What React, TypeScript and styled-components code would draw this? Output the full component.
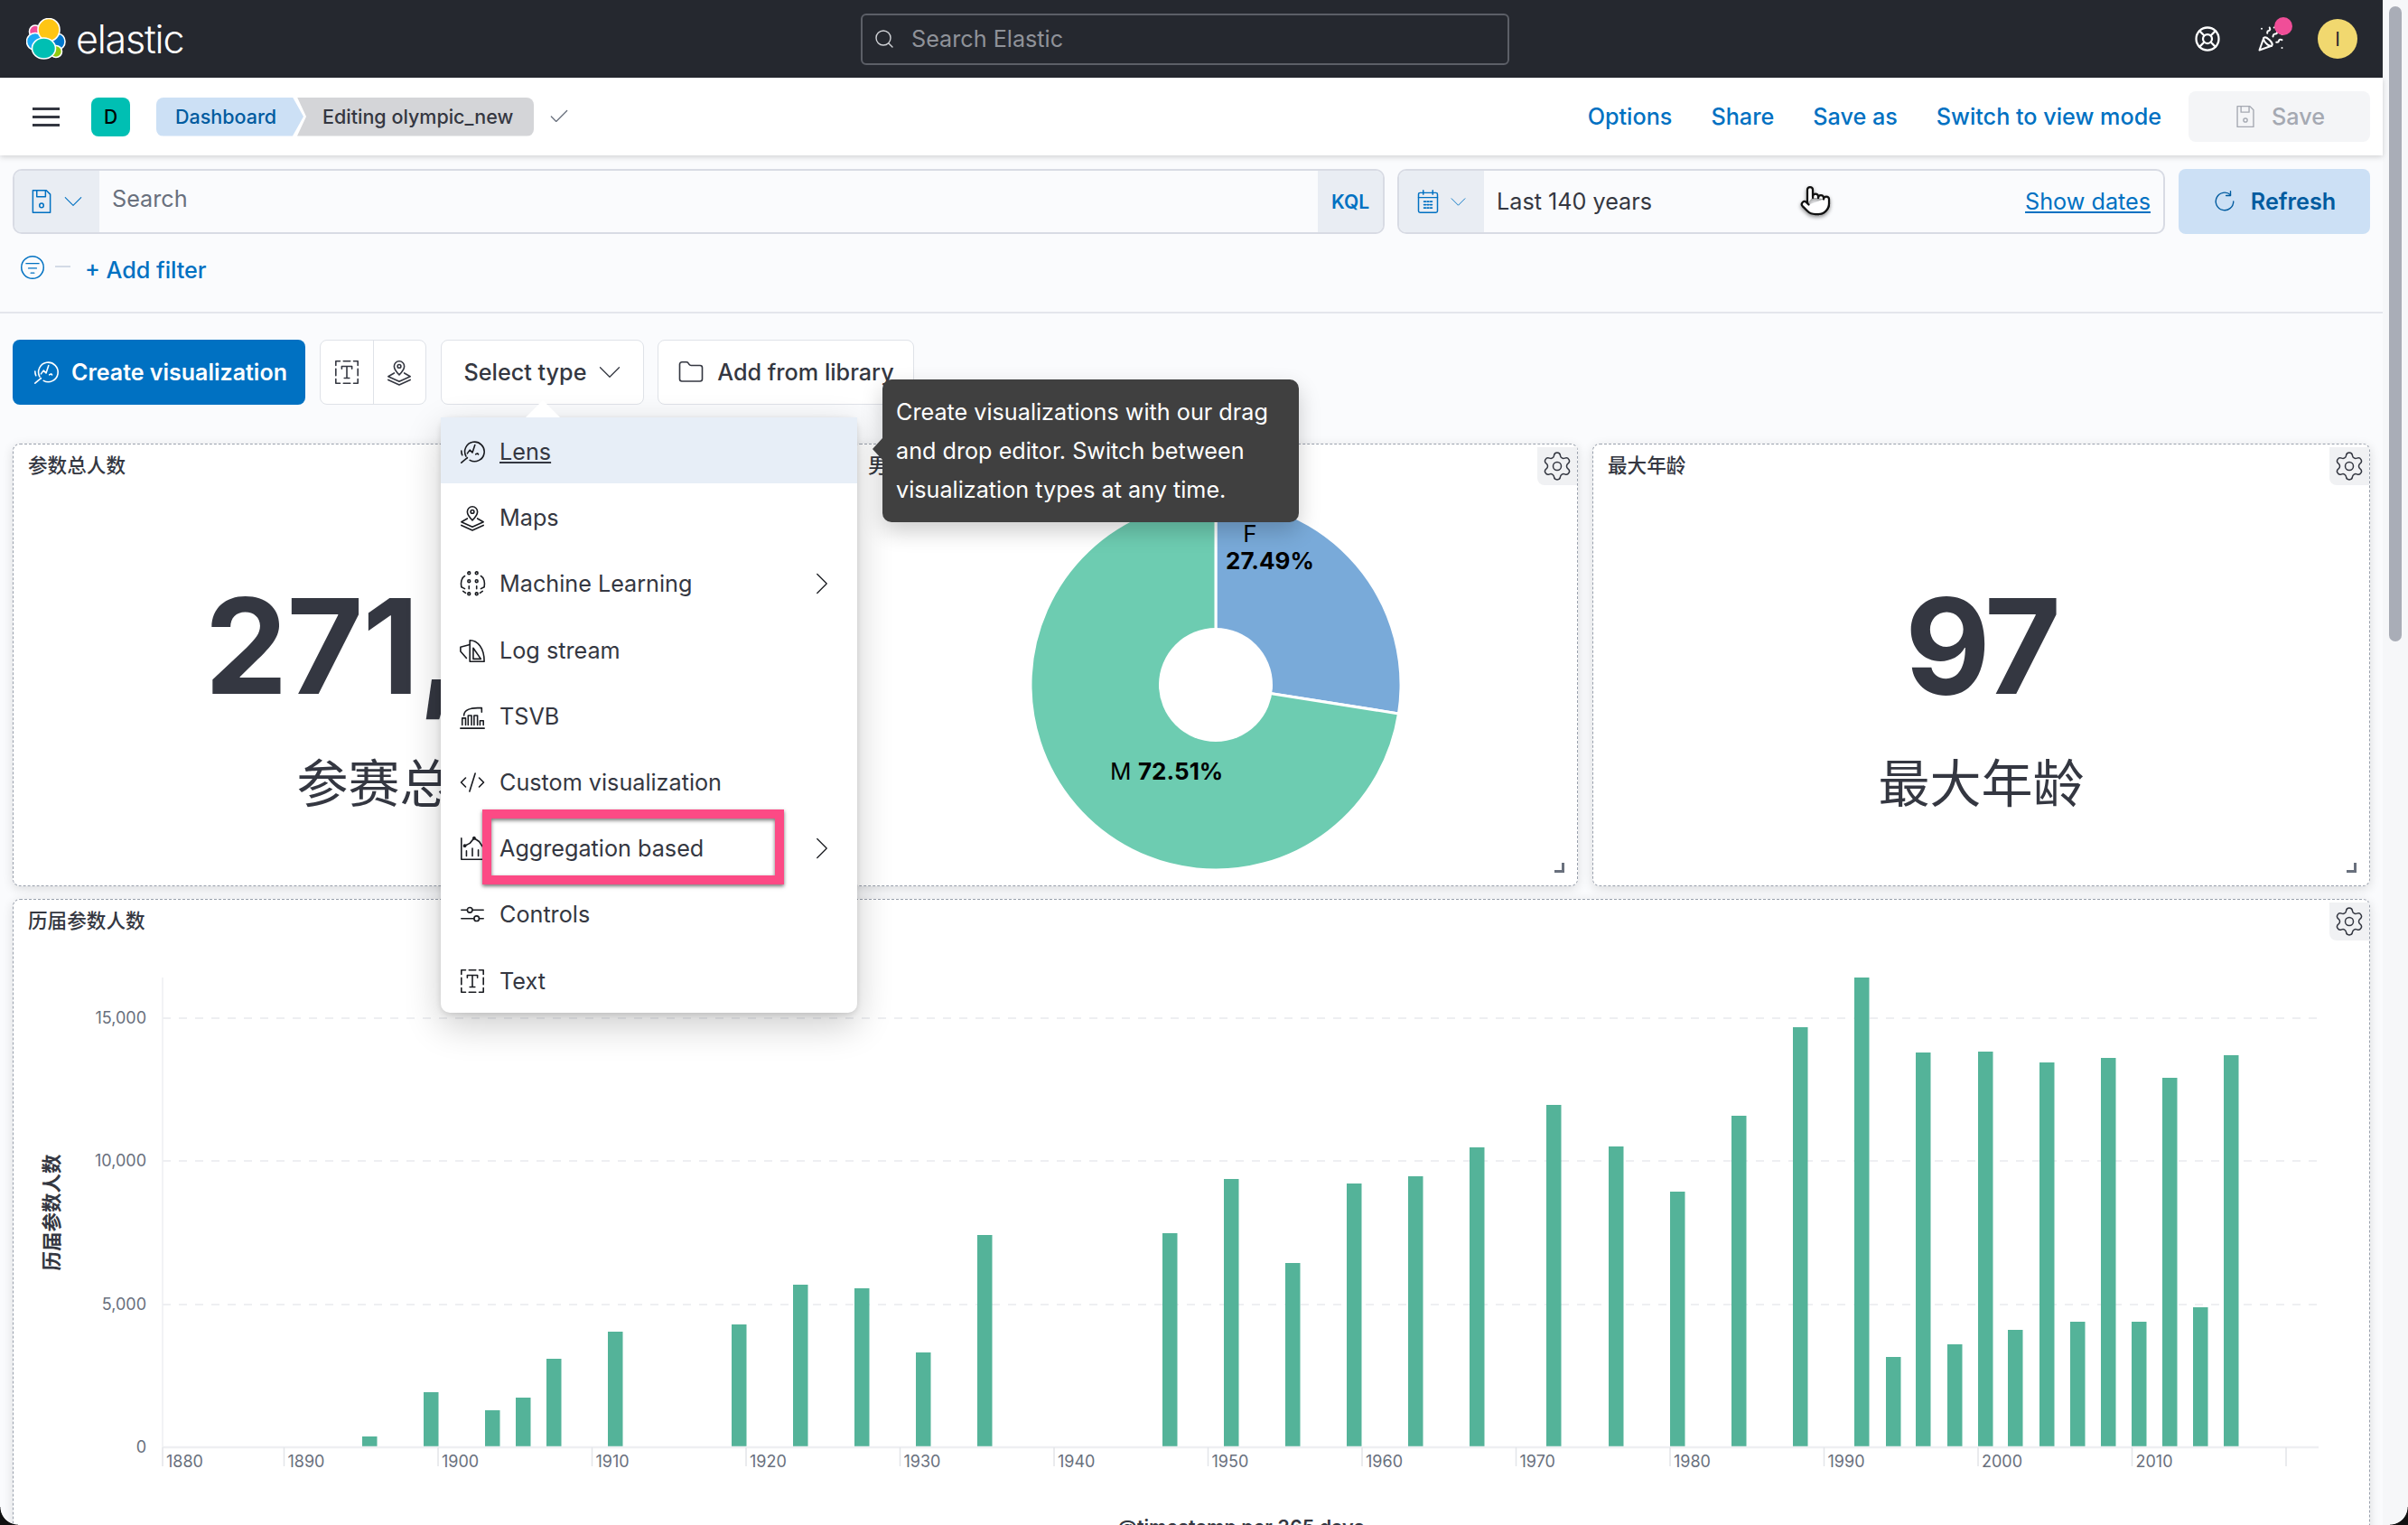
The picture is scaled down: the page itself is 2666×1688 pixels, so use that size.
import { ComponentType } from "react";
import styled, { createGlobalStyle } from "styled-components";
import {
  Check,
  CodeXml,
  Folder,
  LifeBuoy,
  PartyPopper,
  Pointer,
  Search,
  Settings,
} from "lucide-react";

const GlobalStyle = createGlobalStyle`
  html, body {
    margin: 0;
    padding: 0;
    background: #fafbfd;
    font-family: Inter, "Noto Sans CJK SC", sans-serif;
    color: #343741;
  }
  * {
    box-sizing: border-box;
  }
`;

const Page = styled.div`
  position: relative;
  display: flex;
  width: 2666px;
  height: 1688px;
  overflow: hidden;
  background: #fafbfd;
`;

const Main = styled.div`
  display: flex;
  flex-direction: column;
  width: 2638px;
  height: 100%;
`;

const ScrollTrack = styled.div`
  width: 28px;
  padding: 7px 7px 0;
  background: #f6f7f9;
`;

const ScrollThumb = styled.div`
  height: 703px;
  border-radius: 7px;
  background: #a9adb7;
`;

const WindowCorner = styled.div<{ $side: "left" | "right" }>`
  position: absolute;
  bottom: 0;
  ${(p) => p.$side}: 0;
  width: 20px;
  height: 20px;
  background: radial-gradient(
    circle 20px at ${(p) => (p.$side === "left" ? "100% 0" : "0 0")},
    transparent 96%,
    #111 100%
  );
`;

const Header = styled.header`
  display: grid;
  grid-template-columns: 953px 718px 1fr;
  align-items: center;
  height: 86px;
  flex: none;
  background: #25282f;
`;

const Brand = styled.div`
  display: flex;
  align-items: center;
  gap: 11px;
  padding-left: 29px;
`;

const BrandName = styled.span`
  font-size: 43px;
  font-weight: 300;
  line-height: 50px;
  color: #fff;
  letter-spacing: -1.2px;
`;

const GlobalSearch = styled.div`
  display: flex;
  align-items: center;
  gap: 18px;
  height: 57px;
  padding: 0 12px;
  border: 2px solid #5c5f67;
  border-radius: 6px;
  font-size: 25.2px;
  color: #8f9299;
`;

const HeaderActions = styled.div`
  display: flex;
  align-items: center;
  justify-content: flex-end;
  padding-right: 28px;
  color: #fff;
`;

const HelpSlot = styled.div`
  display: flex;
  margin-right: 40px;
`;

const CheerSlot = styled.div`
  position: relative;
  display: flex;
  margin-right: 37px;
`;

const Badge = styled.span`
  position: absolute;
  top: -9px;
  right: -9px;
  width: 20px;
  height: 20px;
  border-radius: 50%;
  background: #f04e98;
`;

const Avatar = styled.div`
  display: flex;
  align-items: center;
  justify-content: center;
  width: 44px;
  height: 44px;
  border-radius: 50%;
  background: #f1d86f;
  font-size: 21px;
  color: #25282f;
`;

const AppBar = styled.div`
  position: relative;
  display: flex;
  align-items: center;
  height: 86px;
  flex: none;
  padding: 0 14px 0 36px;
  background: #fff;
  box-shadow: 0 2px 6px rgba(0, 0, 0, 0.16);
`;

const MenuButton = styled.div`
  display: flex;
  flex-direction: column;
  justify-content: space-between;
  width: 30px;
  height: 21px;
  margin-right: 35px;
  span {
    height: 3px;
    background: #343741;
  }
`;

const SpaceAvatar = styled.div`
  display: flex;
  align-items: center;
  justify-content: center;
  width: 43px;
  height: 43px;
  margin-right: 29px;
  border-radius: 8px;
  background: #00bfb3;
  font-size: 21px;
  font-weight: 500;
  color: #000;
`;

const Crumb = styled.div<{ $first?: boolean }>`
  display: flex;
  align-items: center;
  height: 43px;
  font-size: 21.5px;
  font-weight: 500;
  white-space: nowrap;
  ${(p) =>
    p.$first
      ? `
    width: 163px;
    padding-left: 21px;
    border-radius: 8px 0 0 8px;
    background: #cce0f5;
    color: #005b9f;
    clip-path: polygon(0 0, calc(100% - 12px) 0, 100% 50%, calc(100% - 12px) 100%, 0 100%);
  `
      : `
    width: 262px;
    margin-left: -7px;
    padding-left: 28px;
    border-radius: 0 8px 8px 0;
    background: #d4d5d8;
    color: #343741;
    clip-path: polygon(0 0, 100% 0, 100% 100%, 0 100%, 10px 50%);
  `}
`;

const CrumbCheck = styled.div`
  display: flex;
  margin-left: 15px;
  color: #69707d;
`;

const AppLinks = styled.nav`
  display: flex;
  align-items: center;
  margin-left: auto;
`;

const AppLink = styled.a<{ $gap: number }>`
  margin-right: ${(p) => p.$gap}px;
  font-size: 25.2px;
  font-weight: 500;
  color: #0071c2;
  white-space: nowrap;
`;

const SaveButton = styled.div`
  display: flex;
  align-items: center;
  justify-content: center;
  gap: 16px;
  width: 201px;
  height: 56px;
  border-radius: 8px;
  background: #f4f5f7;
  font-size: 25.2px;
  font-weight: 500;
  color: #a5a9b2;
`;

const QueryRow = styled.div`
  display: flex;
  height: 72px;
  flex: none;
  margin: 15px 14px 0;
`;

const FieldShell = styled.div<{ $width: number }>`
  display: flex;
  align-items: stretch;
  width: ${(p) => p.$width}px;
  flex: none;
  overflow: hidden;
  border: 2px solid #d8dbe4;
  border-radius: 10px;
`;

const FieldPrepend = styled.div<{ $width: number }>`
  display: flex;
  align-items: center;
  justify-content: center;
  gap: 11px;
  width: ${(p) => p.$width}px;
  flex: none;
  padding-right: 3px;
  background: #e9edf3;
  color: #0071c2;
`;

const QueryText = styled.div`
  flex: 1;
  padding: 0 14px;
  font-size: 25.2px;
  line-height: 63px;
  color: #69707d;
`;

const KqlTag = styled.div`
  display: flex;
  align-items: center;
  justify-content: center;
  width: 72px;
  flex: none;
  background: #e9edf3;
  font-size: 21px;
  font-weight: 600;
  color: #0071c2;
`;

const DateGroup = styled(FieldShell)`
  margin-left: 14px;
`;

const DateValue = styled.div`
  flex: 1;
  padding-left: 14px;
  font-size: 25.2px;
  line-height: 68px;
  color: #343741;
`;

const ShowDates = styled.a`
  margin-right: 14px;
  font-size: 25.2px;
  line-height: 68px;
  color: #0071c2;
  text-decoration: underline;
`;

const RefreshButton = styled.div`
  display: flex;
  align-items: center;
  justify-content: center;
  gap: 16px;
  width: 212px;
  flex: none;
  margin-left: 15px;
  border-radius: 8px;
  background: #cce0f5;
  font-size: 25.2px;
  font-weight: 600;
  color: #005b9f;
`;

const FilterRow = styled.div`
  display: flex;
  align-items: center;
  height: 88px;
  flex: none;
  padding: 0 0 6px 22px;
  border-bottom: 2px solid #e4e6ec;
`;

const FilterIconSlot = styled.div`
  display: flex;
  margin-top: -6px;
  color: #0071c2;
`;

const FilterDash = styled.span`
  width: 17px;
  height: 2px;
  margin: -8px 16px 0 11px;
  background: #d3dae6;
`;

const AddFilter = styled.a`
  font-size: 25.2px;
  font-weight: 500;
  color: #0071c2;
`;

const Toolbar = styled.div`
  display: flex;
  height: 72px;
  flex: none;
  margin: 29px 14px 0;
`;

const CreateButton = styled.div`
  display: flex;
  align-items: center;
  gap: 13px;
  width: 324px;
  padding-left: 22px;
  border-radius: 8px;
  background: #0071c2;
  font-size: 25px;
  font-weight: 600;
  color: #fff;
  white-space: nowrap;
`;

const QuickGroup = styled.div`
  display: flex;
  width: 118px;
  margin: 0 16px;
  border: 1px solid #dfe2e8;
  border-radius: 8px;
  background: #fff;
`;

const QuickItem = styled.div`
  display: flex;
  flex: 1;
  align-items: center;
  justify-content: center;
  & + & {
    border-left: 1px solid #dfe2e8;
  }
`;

const SelectWrap = styled.div`
  position: relative;
  width: 225px;
  margin-right: 15px;
`;

const ToolButton = styled.div<{ $width?: number }>`
  display: flex;
  align-items: center;
  justify-content: center;
  gap: 14px;
  width: ${(p) => (p.$width ? `${p.$width}px` : "100%")};
  height: 100%;
  border: 1px solid #dfe2e8;
  border-radius: 8px;
  background: #fff;
  font-size: 25.2px;
  font-weight: 500;
  white-space: nowrap;
`;

const Popover = styled.div`
  position: absolute;
  top: 86px;
  left: 0;
  z-index: 5;
  width: 461px;
  border-radius: 10px;
  background: #fff;
  box-shadow: 0 14px 40px rgba(0, 0, 0, 0.2), 0 2px 6px rgba(0, 0, 0, 0.12);
`;

const PopoverArrow = styled.div`
  position: absolute;
  top: -19px;
  left: 94px;
  width: 38px;
  height: 19px;
  background: #fff;
  clip-path: polygon(50% 0, 100% 100%, 0 100%);
`;

const MenuRow = styled.div<{ $active?: boolean }>`
  position: relative;
  display: flex;
  align-items: center;
  height: 73.2px;
  padding: 3px 27px 0 20px;
  font-size: 25.2px;
  background: ${(p) => (p.$active ? "#e7eef7" : "transparent")};
  &:first-child {
    border-radius: 10px 10px 0 0;
  }
`;

const MenuIcon = styled.div`
  display: flex;
  width: 32px;
  margin-right: 13px;
`;

const MenuLabel = styled.span<{ $active?: boolean }>`
  position: relative;
  z-index: 2;
  flex: 1;
  text-decoration: ${(p) => (p.$active ? "underline" : "none")};
`;

const Highlight = styled.div`
  position: absolute;
  top: -5px;
  left: 46px;
  z-index: 1;
  width: 334px;
  height: 83px;
  border: 10px solid #fc4a85;
  background: #fff;
  box-shadow: 0 2px 4px rgba(0, 0, 0, 0.55), inset 0 2px 4px rgba(0, 0, 0, 0.55);
`;

const Tooltip = styled.div`
  position: absolute;
  top: -42px;
  left: 489px;
  width: 461px;
  height: 158px;
  padding: 15px;
  border-radius: 10px;
  background: #404040;
  box-shadow: 0 10px 24px rgba(0, 0, 0, 0.2);
  font-size: 25.2px;
  line-height: 43px;
  color: #fff;
  white-space: nowrap;
  &::before {
    content: "";
    position: absolute;
    top: 65px;
    left: -11px;
    width: 11px;
    height: 24px;
    background: #404040;
    clip-path: polygon(100% 0, 100% 100%, 0 50%);
  }
`;

const PanelRow = styled.div`
  display: grid;
  grid-template-columns: 914px 803px 861px;
  gap: 16px;
  height: 490px;
  flex: none;
  margin: 43px 14px 0;
`;

const Panel = styled.section<{ $tall?: boolean }>`
  position: relative;
  display: flex;
  flex-direction: column;
  flex: none;
  border: 1px dashed #9aa1ad;
  border-radius: 8px;
  background: #fff;
  box-shadow: 0 3px 12px rgba(0, 0, 0, 0.13);
  ${(p) => (p.$tall ? "height: 800px; margin: 14px 14px 0;" : "")}
`;

const PanelTitle = styled.div`
  height: 47px;
  flex: none;
  padding-left: 16px;
  font-size: 21.6px;
  font-weight: 500;
  line-height: 46px;
  color: #343741;
`;

const GearTab = styled.div`
  position: absolute;
  top: 3px;
  right: 0;
  display: flex;
  align-items: center;
  justify-content: center;
  width: 44px;
  height: 42px;
  border-radius: 0 0 0 8px;
  background: #f0f1f3;
`;

const ResizeHandle = styled.div`
  position: absolute;
  right: 14px;
  bottom: 14px;
  width: 11px;
  height: 11px;
  border-right: 3px solid #69707d;
  border-bottom: 3px solid #69707d;
`;

const MetricBody = styled.div`
  display: flex;
  flex: 1;
  flex-direction: column;
  align-items: center;
  padding-top: 86px;
`;

const MetricValue = styled.div<{ $spacing: number }>`
  height: 180px;
  font-size: 146px;
  font-weight: 700;
  line-height: 180px;
  letter-spacing: ${(p) => p.$spacing}px;
  color: #343741;
  white-space: nowrap;
`;

const MetricLabel = styled.div`
  height: 80px;
  margin-top: 23px;
  font-size: 57px;
  line-height: 80px;
  color: #343741;
`;

const PieBody = styled.div`
  display: flex;
  flex: 1;
  align-items: center;
  justify-content: center;
  padding-bottom: 4px;
`;

const PieLabel = styled.text<{ $bold?: boolean }>`
  font-size: 26px;
  font-weight: ${(p) => (p.$bold ? 700 : 400)};
  fill: #000;
`;

const AxisTick = styled.text`
  font-size: 18px;
  fill: #69707d;
`;

const AxisTitle = styled.text`
  font-size: 21.5px;
  font-weight: 600;
  fill: #343741;
`;

const CursorSlot = styled.div`
  position: absolute;
  top: 204px;
  left: 1992px;
  z-index: 8;
  display: flex;
  filter: drop-shadow(0 2px 2px rgba(0, 0, 0, 0.45));
`;

type IconProps = { size?: number; color?: string };

function Glyph({ size = 30, color = "#343741", children }: IconProps & { children: React.ReactNode }) {
  return (
    <svg width={size} height={size} viewBox="0 0 32 32" fill="none" stroke={color} strokeWidth={1.7} strokeLinecap="round" strokeLinejoin="round">
      {children}
    </svg>
  );
}

const CaretDown = (p: IconProps) => (
  <Glyph {...p}>
    <path d="M2 9l14 14L30 9" />
  </Glyph>
);

const CaretRight = (p: IconProps) => (
  <Glyph {...p}>
    <path d="M9 2l14 14L9 30" />
  </Glyph>
);

const LensIcon = (p: IconProps) => (
  <Glyph {...p}>
    <path d="M8.5 21.5A11.5 11.5 0 1 1 13 26" />
    <path d="M10 23l-7 6" />
    <path d="M4 20a13 13 0 0 1-1-5" />
    <path d="M10 18l3-4 3 3 3-9" />
    <path d="M20 19l2-1 1 1" />
  </Glyph>
);

const MapsIcon = (p: IconProps) => (
  <Glyph {...p}>
    <path d="M16 19c-3-3-6-6-6-10a6 6 0 0 1 12 0c0 4-3 7-6 10z" />
    <circle cx="16" cy="9" r="2" />
    <path d="M10 17l-7 4 13 6 13-6-7-4" />
    <path d="M3 25l13 6 13-6" />
  </Glyph>
);

const MachineIcon = (p: IconProps) => (
  <Glyph {...p}>
    <circle cx="12" cy="3.5" r="1.5" />
    <circle cx="21" cy="3.5" r="1.5" />
    <circle cx="12" cy="13" r="1.5" />
    <circle cx="21" cy="13" r="1.5" />
    <circle cx="12" cy="28" r="1.5" />
    <circle cx="21" cy="28" r="1.5" />
    <path d="M7 7C3 9 2 15 3 20l4 2" />
    <path d="M26 7c4 2 5 8 4 13l-4 2" />
    <path d="M5 25l3 2M28 25l-3 2" />
    <path d="M12 19v3M21 19v3" />
  </Glyph>
);

const LogIcon = (p: IconProps) => (
  <Glyph {...p}>
    <path d="M13 9L2 12v5l7 8" />
    <path d="M13 4c9 0 17 9 17 25H13z" />
    <path d="M17 13l9 13h-9z" />
  </Glyph>
);

const TsvbIcon = (p: IconProps) => (
  <Glyph {...p}>
    <path d="M2 30h28" />
    <path d="M4 26v-8h4v8M11 26V15h4v11M18 26V15h4v11M25 26v-5h4v5" />
    <path d="M6 15c0-7 8-9 16-9h5v5" />
  </Glyph>
);

const AggIcon = (p: IconProps) => (
  <Glyph {...p}>
    <path d="M3 4v25h26" />
    <path d="M7 13l6-3 5-6 6 4 4 6" />
    <circle cx="7" cy="13" r="1.2" />
    <circle cx="18" cy="4" r="1.2" />
    <path d="M9 19v6M16 16v9M23 18v7" />
  </Glyph>
);

const ControlsIcon = (p: IconProps) => (
  <Glyph {...p}>
    <path d="M3 11h7M16 11h13" />
    <circle cx="13" cy="11" r="3" />
    <path d="M3 21h15M24 21h5" />
    <circle cx="21" cy="21" r="3" />
  </Glyph>
);

const TextIcon = (p: IconProps) => (
  <Glyph {...p}>
    <path d="M3 8V3h5M24 3h5v5M29 24v5h-5M8 29H3v-5" />
    <path d="M12 3h8M12 29h8M3 12v8M29 12v8" />
    <path d="M10 12V9h12v3M16 9v14M13 23h6" />
  </Glyph>
);

const DiskIcon = (p: IconProps) => (
  <Glyph {...p}>
    <path d="M5 2h17l5 5v23H5z" />
    <path d="M10 2v8h11V2" />
    <circle cx="16" cy="21" r="2.6" />
  </Glyph>
);

const CalendarIcon = (p: IconProps) => (
  <Glyph {...p}>
    <rect x="4" y="5" width="24" height="25" rx="2" />
    <path d="M4 11h24M10 2v5M22 2v5" />
    <path d="M11 16h2M15 16h2M19 16h2M11 20h2M15 20h2M19 20h2M11 24h2M15 24h2M19 24h2" strokeWidth={2} />
  </Glyph>
);

const FilterIcon = (p: IconProps) => (
  <Glyph {...p}>
    <circle cx="16" cy="16" r="14" />
    <path d="M8 11h16M11 17h10M14 23h4" />
  </Glyph>
);

const RefreshIcon = (p: IconProps) => (
  <Glyph {...p}>
    <path d="M24 7a12 12 0 1 0 4 9" />
    <path d="M24 2v6h-6" />
  </Glyph>
);

function ElasticLogo() {
  return (
    <svg width="44" height="46" viewBox="0 0 44 46">
      <g stroke="#fff" strokeWidth="1.6">
        <ellipse cx="10" cy="15" rx="6.5" ry="7" fill="#f04e98" />
        <ellipse cx="36" cy="26" rx="7" ry="8.5" fill="#0077cc" />
        <ellipse cx="10" cy="26" rx="9.5" ry="9.5" fill="#1ba9f5" />
        <ellipse cx="33" cy="37" rx="6.5" ry="6.5" fill="#93c90e" />
        <ellipse cx="25" cy="13" rx="12" ry="12.5" fill="#fec514" />
        <ellipse cx="19.5" cy="33.5" rx="13" ry="11.5" fill="#00bfb3" />
      </g>
    </svg>
  );
}

const pieCx = 1346;
const pieCy = 758;
const pieR = 205;
const pieHole = 63;
const femaleAngle = 0.2749 * Math.PI * 2;
const pieEndX = pieCx + pieR * Math.sin(femaleAngle);
const pieEndY = pieCy - pieR * Math.cos(femaleAngle);

const barTops: [number, number][] = [
  [401, 1590], [469, 1541], [537, 1561], [571, 1547], [605, 1504], [673, 1474],
  [810, 1466], [878, 1422], [946, 1426], [1014, 1497], [1082, 1367], [1287, 1365],
  [1355, 1305], [1423, 1398], [1491, 1310], [1559, 1302], [1627, 1270], [1712, 1223],
  [1781, 1269], [1849, 1319], [1917, 1235], [1985, 1137], [2053, 1082], [2088, 1502],
  [2121, 1165], [2156, 1488], [2190, 1164], [2223, 1472], [2258, 1176], [2292, 1463],
  [2326, 1171], [2360, 1463], [2394, 1193], [2428, 1447], [2462, 1168],
];

const gridLines: [string, number][] = [
  ["15,000", 1127],
  ["10,000", 1285],
  ["5,000", 1444],
  ["0", 1602],
];

const decades = [1890, 1900, 1910, 1920, 1930, 1940, 1950, 1960, 1970, 1980, 1990, 2000, 2010, 2020];
const tickX = (year: number) => 144 + (year - 1880) * 17.05;

const menuItems: { label: string; Icon: ComponentType<IconProps>; more?: boolean; mark?: boolean }[] = [
  { label: "Lens", Icon: LensIcon },
  { label: "Maps", Icon: MapsIcon },
  { label: "Machine Learning", Icon: MachineIcon, more: true },
  { label: "Log stream", Icon: LogIcon },
  { label: "TSVB", Icon: TsvbIcon },
  { label: "Custom visualization", Icon: (p) => <CodeXml size={p.size} color={p.color} strokeWidth={1.3} /> },
  { label: "Aggregation based", Icon: AggIcon, more: true, mark: true },
  { label: "Controls", Icon: ControlsIcon },
  { label: "Text", Icon: TextIcon },
];

function TrendChart() {
  return (
    <svg width="2608" height="700" viewBox="15 1043 2608 700">
      {gridLines.slice(0, 3).map(([, y]) => (
        <line key={y} x1="180" x2="2567" y1={y} y2={y} stroke="#eeeff2" strokeWidth="2" strokeDasharray="9 9" />
      ))}
      <line x1="180" x2="180" y1="1082" y2="1602" stroke="#eeeff2" strokeWidth="1.5" />
      {gridLines.map(([label, y]) => (
        <AxisTick key={label} x="162" y={y + 6} textAnchor="end">
          {label}
        </AxisTick>
      ))}
      <AxisTitle transform="translate(65 1342) rotate(-90)" textAnchor="middle">
        历届参数人数
      </AxisTitle>
      {barTops.map(([x, top]) => (
        <rect key={x} x={x} y={top} width="16.5" height={1602 - top} fill="#54b399" />
      ))}
      <line x1="180" x2="2567" y1="1602" y2="1602" stroke="#eeeff2" strokeWidth="2.5" />
      <line x1="180" x2="180" y1="1602" y2="1623" stroke="#e3e5e9" strokeWidth="1.5" />
      <AxisTick x="184" y="1624">
        1880
      </AxisTick>
      {decades.map((year) => (
        <g key={year}>
          <line x1={tickX(year)} x2={tickX(year)} y1="1602" y2="1623" stroke="#e3e5e9" strokeWidth="1.5" />
          {year < 2020 && (
            <AxisTick x={tickX(year) + 4} y="1624">
              {year}
            </AxisTick>
          )}
        </g>
      ))}
      <AxisTitle x="1374" y="1698" textAnchor="middle">
        @timestamp per 365 days
      </AxisTitle>
    </svg>
  );
}

export default function App() {
  return (
    <Page>
      <GlobalStyle />
      <Main>
        <Header>
          <Brand>
            <ElasticLogo />
            <BrandName>elastic</BrandName>
          </Brand>
          <GlobalSearch>
            <Search size={24} strokeWidth={1.4} color="#d0d2d6" />
            Search Elastic
          </GlobalSearch>
          <HeaderActions>
            <HelpSlot>
              <LifeBuoy size={30} strokeWidth={1.8} />
            </HelpSlot>
            <CheerSlot>
              <PartyPopper size={30} strokeWidth={1.6} />
              <Badge />
            </CheerSlot>
            <Avatar>I</Avatar>
          </HeaderActions>
        </Header>

        <AppBar>
          <MenuButton>
            <span />
            <span />
            <span />
          </MenuButton>
          <SpaceAvatar>D</SpaceAvatar>
          <Crumb $first>Dashboard</Crumb>
          <Crumb>Editing olympic_new</Crumb>
          <CrumbCheck>
            <Check size={26} strokeWidth={1.2} />
          </CrumbCheck>
          <AppLinks>
            <AppLink $gap={43}>Options</AppLink>
            <AppLink $gap={43}>Share</AppLink>
            <AppLink $gap={43}>Save as</AppLink>
            <AppLink $gap={30}>Switch to view mode</AppLink>
            <SaveButton>
              <DiskIcon size={26} color="#a5a9b2" />
              Save
            </SaveButton>
          </AppLinks>
        </AppBar>

        <QueryRow>
          <FieldShell $width={1519}>
            <FieldPrepend $width={94}>
              <DiskIcon size={28} color="#0071c2" />
              <CaretDown size={20} color="#0071c2" />
            </FieldPrepend>
            <QueryText>Search</QueryText>
            <KqlTag>KQL</KqlTag>
          </FieldShell>
          <DateGroup $width={850}>
            <FieldPrepend $width={94}>
              <CalendarIcon size={28} color="#0071c2" />
              <CaretDown size={17} color="#0071c2" />
            </FieldPrepend>
            <DateValue>Last 140 years</DateValue>
            <ShowDates>Show dates</ShowDates>
          </DateGroup>
          <RefreshButton>
            <RefreshIcon size={26} color="#005b9f" />
            Refresh
          </RefreshButton>
        </QueryRow>

        <FilterRow>
          <FilterIconSlot>
            <FilterIcon size={28} color="#0071c2" />
          </FilterIconSlot>
          <FilterDash />
          <AddFilter>+ Add filter</AddFilter>
        </FilterRow>

        <Toolbar>
          <CreateButton>
            <LensIcon size={30} color="#fff" />
            Create visualization
          </CreateButton>
          <QuickGroup>
            <QuickItem>
              <TextIcon size={30} />
            </QuickItem>
            <QuickItem>
              <MapsIcon size={30} />
            </QuickItem>
          </QuickGroup>
          <SelectWrap>
            <ToolButton>
              Select type
              <CaretDown size={24} />
            </ToolButton>
            <Popover>
              <PopoverArrow />
              {menuItems.map(({ label, Icon, more, mark }, i) => (
                <MenuRow key={label} $active={i === 0}>
                  <MenuIcon>
                    <Icon size={30} color="#1a1c21" />
                  </MenuIcon>
                  {mark && <Highlight />}
                  <MenuLabel $active={i === 0}>{label}</MenuLabel>
                  {more && <CaretRight size={24} color="#1a1c21" />}
                </MenuRow>
              ))}
              <Tooltip>
                Create visualizations with our drag
                <br />
                and drop editor. Switch between
                <br />
                visualization types at any time.
              </Tooltip>
            </Popover>
          </SelectWrap>
          <ToolButton $width={284}>
            <Folder size={30} strokeWidth={1.3} />
            Add from library
          </ToolButton>
        </Toolbar>

        <PanelRow>
          <Panel>
            <PanelTitle>参数总人数</PanelTitle>
            <MetricBody>
              <MetricValue $spacing={-1}>271,116</MetricValue>
              <MetricLabel>参赛总人数</MetricLabel>
            </MetricBody>
            <ResizeHandle />
          </Panel>
          <Panel>
            <PanelTitle>男女比例</PanelTitle>
            <GearTab>
              <Settings size={36} strokeWidth={1} />
            </GearTab>
            <PieBody>
              <svg width="420" height="420" viewBox="1136 548 420 420">
                <path
                  d={`M${pieCx} ${pieCy}V${pieCy - pieR}A${pieR} ${pieR} 0 0 1 ${pieEndX} ${pieEndY}Z`}
                  fill="#79aad9"
                  stroke="#fff"
                  strokeWidth="3"
                />
                <path
                  d={`M${pieCx} ${pieCy}L${pieEndX} ${pieEndY}A${pieR} ${pieR} 0 1 1 ${pieCx} ${pieCy - pieR}Z`}
                  fill="#6dccb1"
                  stroke="#fff"
                  strokeWidth="3"
                />
                <circle cx={pieCx} cy={pieCy} r={pieHole} fill="#fff" />
                <PieLabel x="1384" y="600" textAnchor="middle">
                  F
                </PieLabel>
                <PieLabel x="1406" y="630" textAnchor="middle" $bold>
                  27.49%
                </PieLabel>
                <PieLabel x="1229" y="863">
                  M
                </PieLabel>
                <PieLabel x="1260" y="863" $bold>
                  72.51%
                </PieLabel>
              </svg>
            </PieBody>
            <ResizeHandle />
          </Panel>
          <Panel>
            <PanelTitle>最大年龄</PanelTitle>
            <GearTab>
              <Settings size={36} strokeWidth={1} />
            </GearTab>
            <MetricBody>
              <MetricValue $spacing={-4}>97</MetricValue>
              <MetricLabel>最大年龄</MetricLabel>
            </MetricBody>
            <ResizeHandle />
          </Panel>
        </PanelRow>

        <Panel $tall>
          <PanelTitle>历届参数人数</PanelTitle>
          <GearTab>
            <Settings size={36} strokeWidth={1} />
          </GearTab>
          <TrendChart />
        </Panel>
      </Main>
      <ScrollTrack>
        <ScrollThumb />
      </ScrollTrack>
      <CursorSlot>
        <Pointer size={36} fill="#fff" color="#111" strokeWidth={1.5} />
      </CursorSlot>
      <WindowCorner $side="left" />
      <WindowCorner $side="right" />
    </Page>
  );
}
